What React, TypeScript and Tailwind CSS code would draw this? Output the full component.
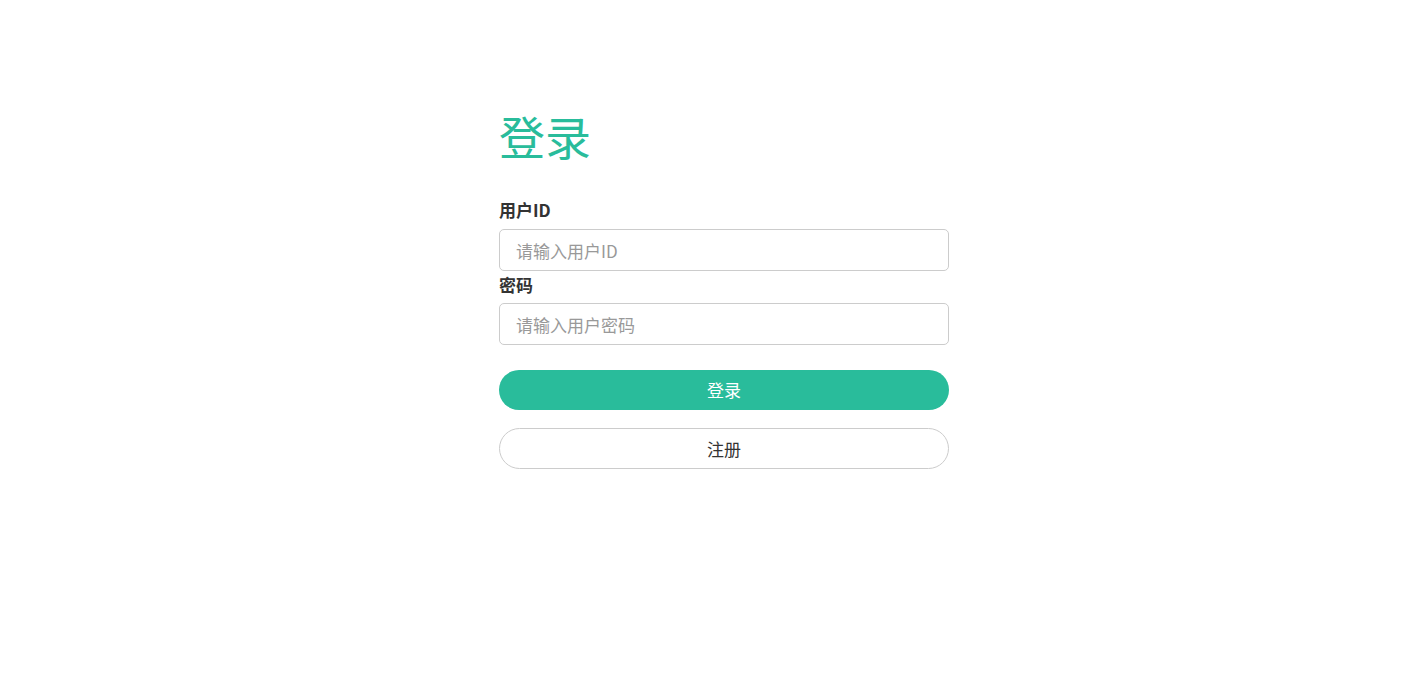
import React from "react";

export default function App() {
  const font = { fontFamily: '"Noto Sans CJK SC", "Open Sans", sans-serif' };
  return (
    <div className="min-h-[691px] w-full bg-white" style={font}>
      <div className="mx-auto w-[470px] pl-[20px] pt-[100px]">
        <h1 className="text-[46px] leading-[70px] font-normal text-[#29bc9b]">登录</h1>
        <div className="mt-[26px] flex flex-col">
          <label className="text-[17px] leading-[28px] font-bold text-[#333]">用户ID</label>
          <input
            className="mt-[5px] h-[42px] w-full rounded-[5px] border border-[#ccc] px-[16px] text-[17px] text-[#333] outline-none placeholder:text-[#999]"
            placeholder="请输入用户ID"
          />
          <label className="text-[17px] leading-[27px] font-bold text-[#333]">密码</label>
          <input
            type="password"
            className="mt-[5px] h-[42px] w-full rounded-[5px] border border-[#ccc] px-[16px] text-[17px] text-[#333] outline-none placeholder:text-[#999]"
            placeholder="请输入用户密码"
          />
          <button className="mt-[25px] h-[40px] w-full rounded-full bg-[#29bc9b] text-[17px] text-white">
            登录
          </button>
          <button className="mt-[18px] h-[41px] w-full rounded-full border border-[#ccc] bg-white text-[17px] text-[#333]">
            注册
          </button>
        </div>
      </div>
    </div>
  );
}
